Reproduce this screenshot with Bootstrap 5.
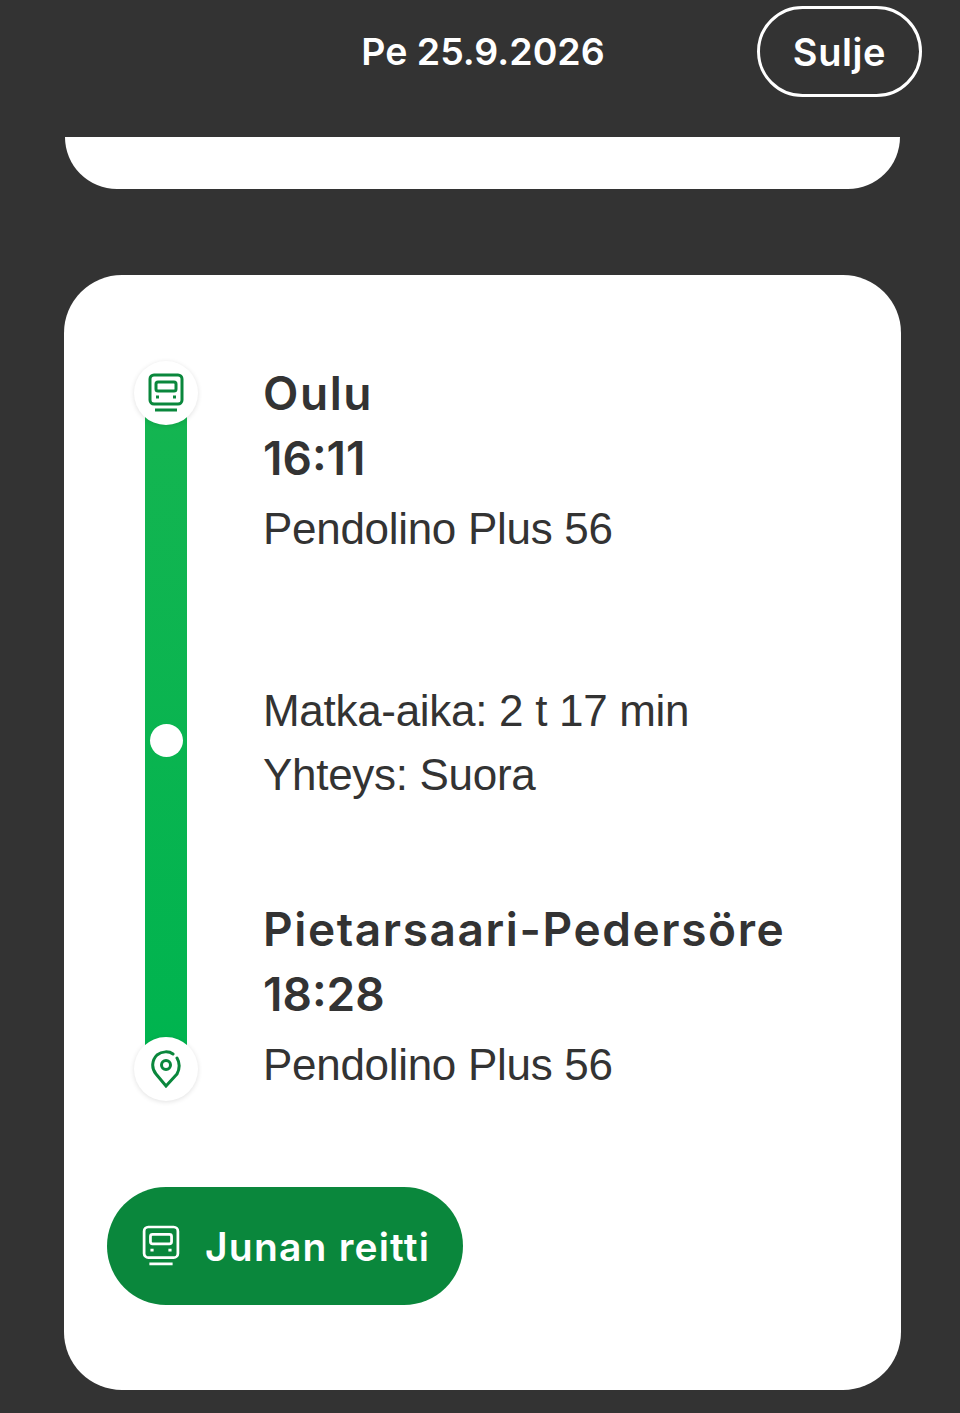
<!DOCTYPE html>
<html lang="fi">
<head>
    <meta charset="UTF-8">
    <meta name="viewport" content="width=device-width, initial-scale=1.0">
    <title>Junan tiedot</title>
    <link href="https://cdn.jsdelivr.net/npm/bootstrap@5.3.0/dist/css/bootstrap.min.css" rel="stylesheet">
    <style>
        html, body { height: 1413px; overflow: hidden; }
        body { background: #333333; font-family: "Liberation Sans", Arial, sans-serif; color: #333333; }
        .top-bar { height: 137px; padding-right: 38px; padding-top: 6px; }
        .top-date { position: absolute; left: 0; width: 966px; top: 25px; text-align: center; color: #fff; font: 600 37.5px/54px Inter, sans-serif; }
        .close-btn { width: 165px; height: 91px; border: 3px solid #fff; border-radius: 46px; color: #fff; background: none; font: 600 38px/1 Inter, sans-serif; letter-spacing: 0.6px; padding: 0; }
        .prev-card { height: 52px; margin: 0 60px 86px 65px; background: #fff; border-radius: 0 0 52px 52px; }
        .trip-card { height: 1115px; margin: 0 59px 0 64px; background: #fff; border: 0; border-radius: 58px; padding: 86px 43px 0; }
        .rail { width: 64px; height: 740px; margin-left: 27px; margin-right: 65px; }
        .rail-bar { width: 42px; margin: -8px 0; padding-top: 19px; background: linear-gradient(#14b551, #00b44f); }
        .rail-dot { width: 33px; height: 33px; background: #fff; border-radius: 50%; }
        .rail-node { width: 64px; height: 64px; background: #fff; border-radius: 50%; box-shadow: 0 1px 5px rgba(0,0,0,.12); z-index: 1; }
        .stop-name { font: 600 46px/64px Inter, sans-serif; letter-spacing: 1.6px; }
        .stop-time { font: 600 46px/66px Inter, sans-serif; }
        .info-line { font-size: 44px; line-height: 64px; letter-spacing: -0.3px; }
        .stop-train { margin-top: 6px; }
        .trip-info { margin-top: 118px; margin-bottom: 90px; }
        .route-btn { width: 356px; height: 118px; margin-top: 86px; background: #0a873c; color: #fff; border: 0; border-radius: 59px; padding: 0 0 0 35px; gap: 25px; font: 600 39px/1 Inter, sans-serif; letter-spacing: 1.2px; }
    </style>
</head>
<body>
    <div class="top-bar d-flex justify-content-end align-items-start">
        <div class="top-date">Pe 25.9.2026</div>
        <button class="close-btn" type="button">Sulje</button>
    </div>
    <div class="prev-card"></div>

    <div class="card trip-card">
        <div class="d-flex">
            <div class="rail d-flex flex-column align-items-center flex-shrink-0">
                <div class="rail-node d-flex align-items-center justify-content-center flex-shrink-0">
                    <svg width="36" height="40" viewBox="0 0 36 40" fill="none" stroke="#0a873c" stroke-width="3">
                        <path d="M6 2h24a4 4 0 0 1 4 4v21a4 4 0 0 1-4 4H6a4 4 0 0 1-4-4V6a4 4 0 0 1 4-4z"/>
                        <rect x="8" y="9" width="20" height="9" rx="2"/>
                        <path d="M8 24h3M25 24h3M7 37h22"/>
                    </svg>
                </div>
                <div class="rail-bar flex-grow-1 d-flex align-items-center justify-content-center">
                    <div class="rail-dot"></div>
                </div>
                <div class="rail-node d-flex align-items-center justify-content-center flex-shrink-0">
                    <svg width="32" height="38" viewBox="0 0 32 38" fill="none" stroke="#0a873c" stroke-width="3" stroke-linecap="round">
                        <path d="M27 24 16 36 6 24C1 18 2 10 7 5c5-4 12-4 16-1M27 8c3 5 3 10 0 16"/>
                        <circle cx="16" cy="15" r="4.5"/>
                    </svg>
                </div>
            </div>
            <div>
                <div class="stop-name">Oulu</div>
                <div class="stop-time">16:11</div>
                <div class="info-line stop-train">Pendolino Plus 56</div>
                <div class="trip-info">
                    <div class="info-line">Matka-aika: 2 t 17 min</div>
                    <div class="info-line">Yhteys: Suora</div>
                </div>
                <div class="stop-name">Pietarsaari-Pedersöre</div>
                <div class="stop-time">18:28</div>
                <div class="info-line stop-train">Pendolino Plus 56</div>
            </div>
        </div>
        <button class="route-btn d-flex align-items-center" type="button">
            <svg width="38" height="44" viewBox="0 0 36 40" fill="none" stroke="#fff" stroke-width="2.6">
                <path d="M6 2h24a4 4 0 0 1 4 4v21a4 4 0 0 1-4 4H6a4 4 0 0 1-4-4V6a4 4 0 0 1 4-4z"/>
                <rect x="8" y="9" width="20" height="9" rx="2"/>
                <path d="M8 24h3M25 24h3M7 37h22"/>
            </svg>
            Junan reitti
        </button>
    </div>
    <script src="https://cdn.jsdelivr.net/npm/bootstrap@5.3.0/dist/js/bootstrap.bundle.min.js"></script>
</body>
</html>
